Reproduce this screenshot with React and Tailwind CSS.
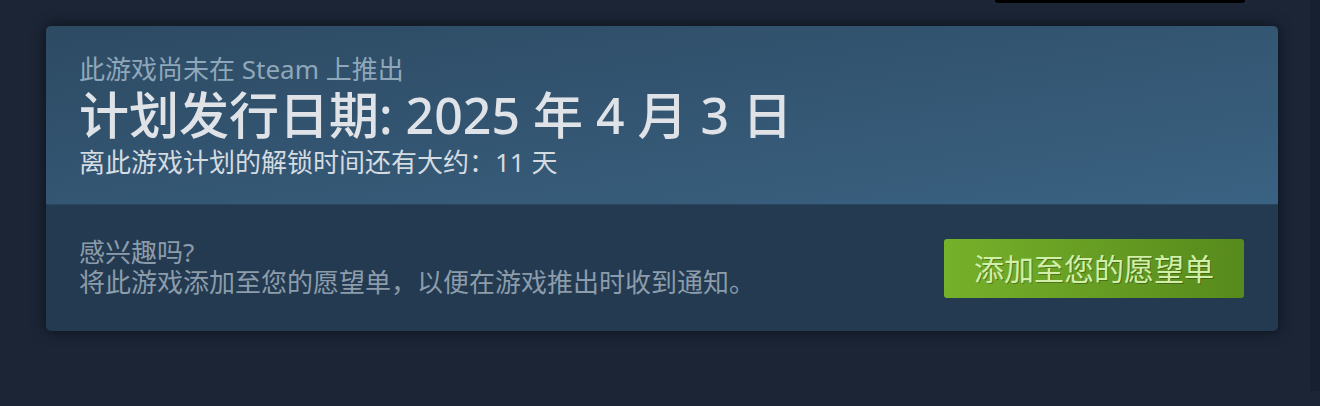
export default function App() {
  return (
    <div className="min-h-[406px] bg-[#1b2536] flex font-['Noto_Sans','Noto_Sans_CJK_SC',sans-serif]">
      <div className="relative flex-1 pt-[26px] pl-[46px] pr-[32px]">
        <div className="absolute top-0 left-[995px] w-[250px] h-[3px] bg-black rounded-b-[3px]" />

        <div className="rounded-[5px] overflow-hidden shadow-[0_0_14px_rgba(0,0,0,0.55)]">
          <div className="h-[178px] pl-[33px] pt-[27px] bg-linear-to-br from-[#2d4a63] to-[#3a6282]">
            <p className="text-[26px] leading-[32px] text-[#8fa7ba]">此游戏尚未在 Steam 上推出</p>
            <h1 className="text-[50px] leading-[60px] text-[#dfe3e7] font-medium">
              计划发行日期: 2025 年 4 月 3 日
            </h1>
            <p className="text-[26px] leading-[34px] text-[#d4dbe1]">离此游戏计划的解锁时间还有大约：11 天</p>
          </div>

          <div className="h-[127px] bg-[#233a50] border-t border-[#2a4560] flex items-center justify-between pl-[33px] pr-[34px]">
            <div className="text-[26px] leading-[30px] text-[#8c9cab] pb-[3px]">
              <p>感兴趣吗?</p>
              <p>将此游戏添加至您的愿望单，以便在游戏推出时收到通知。</p>
            </div>
            <button className="w-[300px] h-[59px] rounded-[3px] bg-linear-to-r from-[#76b12a] to-[#578a1c] text-[30px] text-[#d2efa9] [text-shadow:1px_1px_0_rgba(0,0,0,0.3)]">
              添加至您的愿望单
            </button>
          </div>
        </div>
      </div>
      <div className="w-[10px] h-[391px] bg-[#172030]" />
    </div>
  );
}
